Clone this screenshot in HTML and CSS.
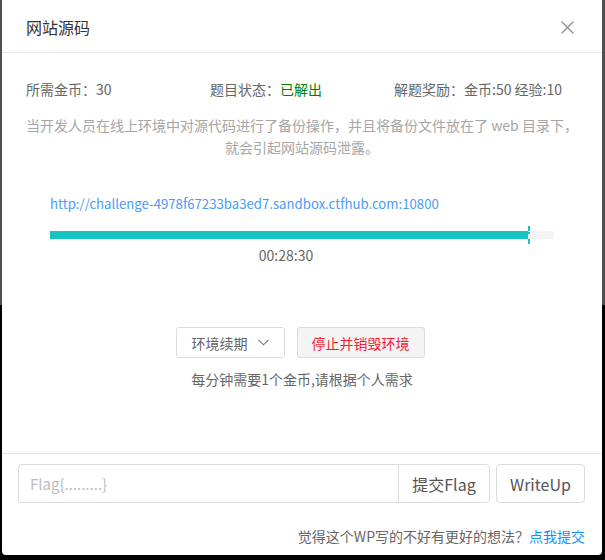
FILE: index.html
```html
<!DOCTYPE html>
<html lang="zh-CN">
<head>
  <meta charset="UTF-8">
  <meta name="viewport" content="width=device-width, initial-scale=1.0">
  <title>网站源码</title>
  <link rel="stylesheet" href="styles.css">
</head>
<body>
  <div class="modal">
    <div class="modal-header">
      <span class="modal-title">网站源码</span>
      <span class="close">
        <svg width="13" height="13" viewBox="0 0 13 13">
          <path d="M0.5 0.5 L12.5 12.5 M12.5 0.5 L0.5 12.5" stroke="#8c8c8c" stroke-width="1.2" fill="none"/>
        </svg>
      </span>
    </div>

    <div class="modal-body">
      <div class="info-row">
        <div>所需金币：30</div>
        <div>题目状态：<span class="solved">已解出</span></div>
        <div>解题奖励：金币:50 经验:10</div>
      </div>
      <p class="desc">当开发人员在线上环境中对源代码进行了备份操作，并且将备份文件放在了 web 目录下，<br>就会引起网站源码泄露。</p>

      <div class="env">
        <a class="env-url" href="#">http://challenge-4978f67233ba3ed7.sandbox.ctfhub.com:10800</a>
        <div class="progress">
          <div class="progress-fill" style="width: 94.8%;"></div>
          <span class="progress-mark" style="left: 94.8%;"></span>
        </div>
        <div class="timer">00:28:30</div>
      </div>

      <div class="actions">
        <button class="btn btn-renew">环境续期
          <svg width="11" height="7" viewBox="0 0 11 7">
            <path d="M0.5 0.8 L5.5 5.8 L10.5 0.8" stroke="#777" stroke-width="1.1" fill="none"/>
          </svg>
        </button>
        <button class="btn btn-danger">停止并销毁环境</button>
      </div>
      <div class="note">每分钟需要1个金币,请根据个人需求</div>
    </div>

    <div class="modal-footer">
      <div class="flag-row">
        <div class="flag-group">
          <input type="text" placeholder="Flag{.........}">
          <button class="btn-submit">提交Flag</button>
        </div>
        <button class="btn-writeup">WriteUp</button>
      </div>
      <div class="feedback">觉得这个WP写的不好有更好的想法？<a href="#">点我提交</a></div>
    </div>
  </div>
</body>
</html>
```

FILE: styles.css
```css
body {
  margin: 0;
  padding: 0;
  height: 560px;
  overflow: hidden;
  background: linear-gradient(#505050 0, #505050 305px, #000 305px);
  font-family: "Noto Sans CJK SC", "Noto Sans", sans-serif;
  font-size: 14px;
  color: #666;
}

.modal {
  width: 600px;
  height: 555px;
  margin-left: 2px;
  background: #fff;
  border-radius: 0 0 4px 4px;
  display: flex;
  flex-direction: column;
}

.modal-header {
  height: 53px;
  padding: 2px 24px 0 24px;
  box-sizing: border-box;
  border-bottom: 1px solid #e8e8e8;
  display: flex;
  align-items: center;
  justify-content: space-between;
  flex-shrink: 0;
}

.modal-title {
  font-size: 16px;
  color: #333;
}

.close {
  display: flex;
  margin-right: 4px;
}

.modal-body {
  flex: 1;
  padding: 25px 24px 0 24px;
}

.info-row {
  display: grid;
  grid-template-columns: 1fr 1fr 1fr;
  line-height: 22px;
  color: #666;
}

.solved {
  color: #008000;
}

.desc {
  margin: 14px 0 0 0;
  line-height: 22px;
  text-align: center;
  color: #a6a6a6;
}

.env {
  padding: 0 24px;
  margin-top: 35px;
}

.env-url {
  display: block;
  line-height: 22px;
  font-size: 13.2px;
  color: #4a9cf5;
  text-decoration: none;
}

.progress {
  position: relative;
  height: 8px;
  margin-top: 16px;
  background: #f3f3f3;
}

.progress-fill {
  height: 100%;
  background: #16c4c4;
}

.progress-mark {
  position: absolute;
  top: -5px;
  width: 2px;
  height: 18px;
  background: linear-gradient(#16c4c4 0, #16c4c4 5px, #fff 5px, #fff 6px, #16c4c4 6px, #16c4c4 8px, transparent 8px, transparent 13px, #16c4c4 13px);
}

.timer {
  margin-top: 5px;
  line-height: 22px;
  text-align: center;
  color: #666;
  padding-right: 32px;
}

.actions {
  display: flex;
  justify-content: center;
  gap: 12px;
  margin-top: 61px;
  padding-right: 4px;
}

.btn {
  height: 31px;
  padding: 0 15px;
  border: 1px solid #dcdcdc;
  border-radius: 3px;
  background: #fff;
  color: #666;
  font-family: inherit;
  font-size: 14px;
  display: flex;
  align-items: center;
  gap: 10px;
}

.btn-renew {
  padding: 0 15px 0 15px;
}

.btn-danger {
  background: #f4f4f4;
  color: #f5222d;
  padding: 0 14px;
}

.note {
  margin-top: 10px;
  line-height: 22px;
  text-align: center;
  color: #666;
}

.modal-footer {
  border-top: 1px solid #e8e8e8;
  padding: 10px 17px 8px 16px;
  flex-shrink: 0;
}

.flag-row {
  display: flex;
  gap: 6px;
}

.flag-group {
  flex: 1;
  display: flex;
}

.flag-group input {
  flex: 1;
  height: 39px;
  box-sizing: border-box;
  padding: 0 11px;
  border: 1px solid #dcdcdc;
  border-right: none;
  border-radius: 4px 0 0 4px;
  font-family: inherit;
  font-size: 15px;
  color: #555;
  outline: none;
}

.flag-group input::placeholder {
  color: #bdbdbd;
}

.btn-submit,
.btn-writeup {
  height: 39px;
  border: 1px solid #dcdcdc;
  background: #fff;
  color: #555;
  font-family: inherit;
  font-size: 16px;
}

.btn-submit {
  width: 92px;
  border-radius: 0 4px 4px 0;
}

.btn-writeup {
  width: 89px;
  border-radius: 4px;
}

.feedback {
  margin-top: 22px;
  line-height: 22px;
  text-align: right;
  color: #666;
}

.feedback a {
  color: #1890ff;
  text-decoration: none;
}
```
